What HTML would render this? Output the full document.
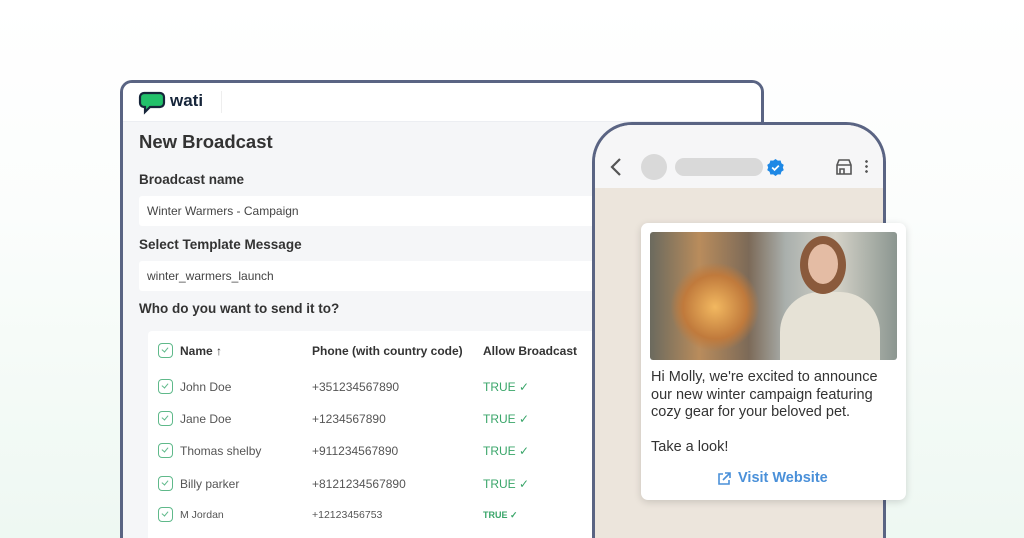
<!DOCTYPE html>
<html style="overflow:hidden;height:538px"><head><style>
html,body{margin:0;width:1024px;height:538px;overflow:hidden}
body{font-family:"Liberation Sans",sans-serif;background:linear-gradient(180deg,#fff 0%,#fbfdfc 40%,#eef8f2 100%)}
#wrap{position:relative;width:1024px;height:538px;overflow:hidden}
.abs{position:absolute}
.dash{left:120px;top:80px;width:638px;height:455px;border:3px solid #5a6483;border-bottom:none;border-radius:12px 12px 0 0;background:#f5f6f8;overflow:hidden}
.hdr{left:0;top:0;width:100%;height:38px;background:#fff;border-bottom:1px solid #eceef2}
.lbl{font-size:13.5px;font-weight:bold;color:#333}
.inp{left:16px;width:470px;height:30px;background:#fff;border-radius:3px;font-size:12px;color:#444;line-height:30px;padding-left:8px;box-sizing:border-box}
.tbl{left:25px;top:248px;width:460px;height:220px;background:#fff;border-radius:4px}
.row{position:absolute;left:0;font-size:12px;color:#555}
.cb{position:absolute;left:10px;width:15px;height:15px;border:1.3px solid #5fb98a;border-radius:4px;box-sizing:border-box}
.cb:after{content:"";position:absolute;left:4px;top:2px;width:3px;height:5px;border:solid #5fb98a;border-width:0 1.3px 1.3px 0;transform:rotate(40deg)}
.t{color:#3aa66a}
.phone{left:592px;top:122px;width:288px;height:413px;border:3px solid #5a6483;border-bottom:none;border-radius:40px 40px 0 0;background:#ece5dc;overflow:hidden}
</style></head><body><div id="wrap">
<div class="abs dash">
 <div class="abs hdr">
  <svg class="abs" style="left:15px;top:8px" width="28" height="24" viewBox="0 0 28 24"><path d="M6 2h16a4 4 0 0 1 4 4v6a4 4 0 0 1-4 4H12l-5 5v-5H6a4 4 0 0 1-4-4V6a4 4 0 0 1 4-4z" fill="#22c06a" stroke="#16253a" stroke-width="2.2"/></svg>
  <div class="abs" style="left:47px;top:8px;font-size:17px;font-weight:bold;color:#16253a">wati</div>
  <div class="abs" style="left:98px;top:8px;width:1px;height:22px;background:#eee"></div>
 </div>
 <div class="abs" style="left:16px;top:48px;font-size:18.5px;color:#333;font-weight:bold">New Broadcast</div>
 <div class="abs lbl" style="left:16px;top:89px">Broadcast name</div>
 <div class="abs inp" style="top:113px">Winter Warmers - Campaign</div>
 <div class="abs lbl" style="left:16px;top:154px">Select Template Message</div>
 <div class="abs inp" style="top:178px">winter_warmers_launch</div>
 <div class="abs lbl" style="left:16px;top:218px">Who do you want to send it to?</div>
 <div class="abs tbl">
  <div class="cb" style="top:12px"></div><div class="row" style="left:32px;top:13px;font-weight:bold;color:#333">Name ↑</div>
  <div class="row" style="left:164px;top:13px;font-weight:bold;color:#333">Phone (with country code)</div>
  <div class="row" style="left:335px;top:13px;font-weight:bold;color:#333">Allow Broadcast</div>
  <div class="cb" style="top:48px"></div><div class="row" style="left:32px;top:49px">John Doe</div><div class="row" style="left:164px;top:49px">+351234567890</div><div class="row t" style="left:335px;top:49px">TRUE ✓</div>
  <div class="cb" style="top:80px"></div><div class="row" style="left:32px;top:81px">Jane Doe</div><div class="row" style="left:164px;top:81px">+1234567890</div><div class="row t" style="left:335px;top:81px">TRUE ✓</div>
  <div class="cb" style="top:112px"></div><div class="row" style="left:32px;top:113px">Thomas shelby</div><div class="row" style="left:164px;top:113px">+911234567890</div><div class="row t" style="left:335px;top:113px">TRUE ✓</div>
  <div class="cb" style="top:145px"></div><div class="row" style="left:32px;top:146px">Billy parker</div><div class="row" style="left:164px;top:146px">+8121234567890</div><div class="row t" style="left:335px;top:146px">TRUE ✓</div>
  <div class="cb" style="top:176px"></div><div class="row" style="left:32px;top:178px;font-size:10.5px">M Jordan</div><div class="row" style="left:164px;top:178px;font-size:10.5px">+12123456753</div><div class="row t" style="left:335px;top:179px;font-size:9px;font-weight:bold">TRUE ✓</div>
 </div>
</div>
<div class="abs phone">
 <div class="abs" style="left:0;top:0;width:100%;height:63px;background:#f6f6f7"></div>
 <svg class="abs" style="left:14px;top:32px" width="14" height="20"><path d="M11 2L3 10l8 8" stroke="#555" stroke-width="2.2" fill="none"/></svg>
 <div class="abs" style="left:46px;top:29px;width:26px;height:26px;border-radius:50%;background:#d9d9d9"></div>
 <div class="abs" style="left:80px;top:33px;width:88px;height:18px;border-radius:9px;background:#d9d9d9"></div>
 <svg class="abs" style="left:171px;top:33px" width="19" height="19" viewBox="0 0 20 20"><path d="M10 1l2.4 1.8 3-.2.8 2.9 2.5 1.7-1 2.8 1 2.8-2.5 1.7-.8 2.9-3-.2L10 19l-2.4-1.8-3 .2-.8-2.9L1.3 12.8l1-2.8-1-2.8 2.5-1.7.8-2.9 3 .2z" fill="#1e88e5"/><path d="M6.5 10l2.5 2.5 4.5-4.5" stroke="#fff" stroke-width="1.8" fill="none"/></svg>
 <svg class="abs" style="left:240px;top:34px" width="18" height="16"><path d="M2 6l2-5h10l2 5v9H2z M2 6h14 M5 15v-5h4v5" stroke="#555" stroke-width="1.6" fill="none"/></svg>
 <div class="abs" style="left:270px;top:34px;width:3px;height:14px;background:radial-gradient(circle,#555 1.2px,transparent 1.5px) 0 0/3px 5px"></div>
</div>
<div class="abs" style="left:641px;top:223px;width:265px;height:277px;background:#fff;border-radius:7px;box-shadow:0 2px 8px rgba(0,0,0,.15)">
 <div class="abs" style="left:9px;top:9px;width:247px;height:128px;border-radius:3px;overflow:hidden;background:linear-gradient(90deg,#6b6a5e 0%,#b98c5c 20%,#7c6a58 40%,#aab0ad 55%,#d4d2c8 75%,#8b9690 100%)">
  <div class="abs" style="left:20px;top:30px;width:90px;height:90px;border-radius:50%;background:radial-gradient(circle,#f2b860,#c07a3c 50%,transparent 70%)"></div>
  <div class="abs" style="left:130px;top:60px;width:100px;height:68px;border-radius:40px 40px 0 0;background:#e6e2d6"></div>
  <div class="abs" style="left:150px;top:4px;width:46px;height:58px;border-radius:50%;background:#8a5a3c"></div>
  <div class="abs" style="left:158px;top:12px;width:30px;height:40px;border-radius:50%;background:#e4bca4"></div>
 </div>
 <div class="abs" style="left:10px;top:146px;font-size:14.5px;line-height:17.5px;color:#333">Hi Molly, we're excited to announce<br>our new winter campaign featuring<br>cozy gear for your beloved pet.<br><br>Take a look!</div>
 <svg class="abs" style="left:76px;top:249px" width="14" height="14"><path d="M6 2H2v10h10V8 M8 1h5v5 M13 1L6 8" stroke="#4a90d9" stroke-width="1.6" fill="none"/></svg>
 <div class="abs" style="left:97px;top:247px;font-size:14.5px;font-weight:bold;color:#4a90d9">Visit Website</div>
</div>
</div></body></html>
